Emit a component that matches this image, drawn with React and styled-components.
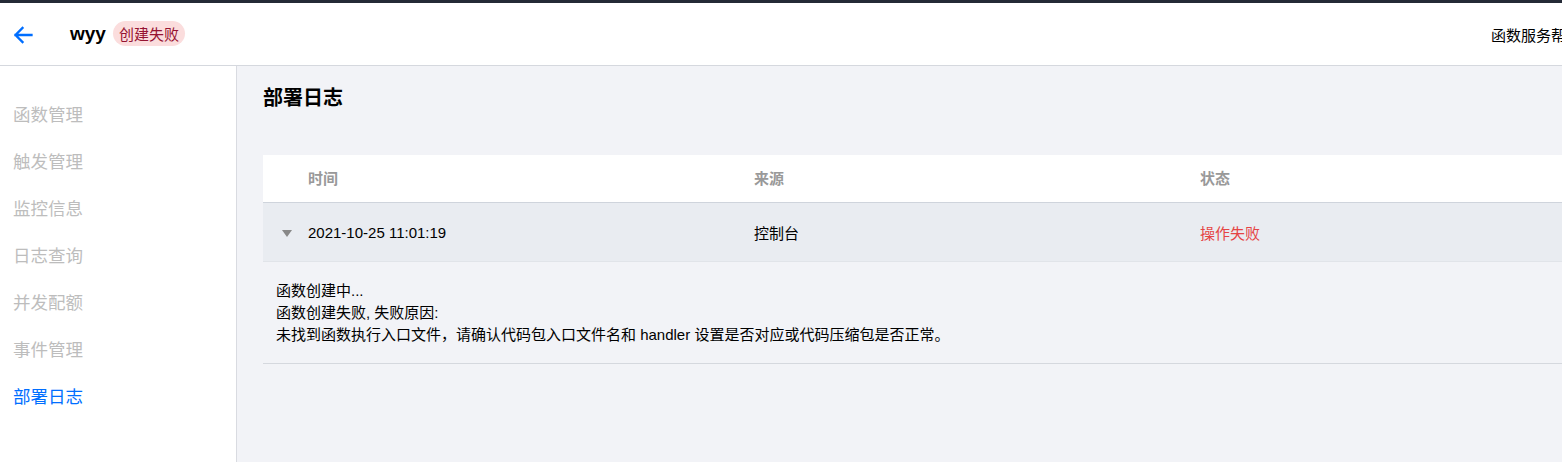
import React from "react";
import styled, { createGlobalStyle } from "styled-components";

const GlobalStyle = createGlobalStyle`
  html, body {
    margin: 0;
    padding: 0;
    overflow: hidden;
    background: #f2f3f7;
  }
  body {
    font-family: "Liberation Sans", "Noto Sans CJK SC", sans-serif;
    color: #000;
  }
`;

const Page = styled.div`
  width: 1600px;
  height: 462px;
  display: flex;
  flex-direction: column;
  border-top: 3px solid #242a36;
  box-sizing: border-box;
`;

const Header = styled.header`
  height: 62px;
  flex: none;
  display: flex;
  align-items: center;
  background: #fff;
  border-bottom: 1px solid #d5d8de;
  padding: 0 19px 0 13px;
`;

const BackButton = styled.button`
  border: 0;
  background: none;
  padding: 0;
  margin: 1px 37px 0 0;
  display: flex;
  cursor: pointer;
`;

const Name = styled.h1`
  margin: 0 7px 0 0;
  font-size: 19px;
  font-weight: bold;
  color: #000;
`;

const Badge = styled.span`
  display: inline-flex;
  align-items: center;
  height: 25px;
  padding: 0 6px;
  border-radius: 13px;
  background: #fbdddd;
  color: #961331;
  font-size: 15px;
  margin-top: -2px;
`;

const HelpLink = styled.a`
  margin-left: auto;
  font-size: 15px;
  color: #000;
  text-decoration: none;
`;

const Body = styled.div`
  flex: 1;
  display: flex;
  min-height: 0;
`;

const Sidebar = styled.nav`
  width: 236px;
  flex: none;
  background: #fff;
  border-right: 1px solid #d9dbe1;
  padding-top: 26px;
`;

const NavItem = styled.div`
  height: 47px;
  line-height: 47px;
  padding-left: 13px;
  font-size: 17.5px;
  color: ${({ $active }) => ($active ? "#006eff" : "#bdbdbd")};
  cursor: pointer;
`;

const Main = styled.main`
  flex: 1;
  padding: 18px 26px 0 26px;
`;

const Title = styled.h2`
  margin: 0 0 43px;
  font-size: 20px;
  line-height: 28px;
  font-weight: bold;
`;

const Table = styled.div`
  font-size: 15px;
`;

const Row = styled.div`
  display: grid;
  grid-template-columns: 45px 446px 446px 1fr;
  align-items: center;
`;

const HeadRow = styled(Row)`
  height: 48px;
  box-sizing: border-box;
  padding-bottom: 2px;
  background: #fff;
  border-bottom: 1px solid #cfd4dc;
  color: #999;
  font-weight: bold;
`;

const DataRow = styled(Row)`
  height: 58px;
  background: #e9ecf1;
  border-bottom: 1px solid #e1e4e9;
`;

const Expander = styled.span`
  display: flex;
  justify-content: center;
  padding-left: 2px;
  padding-top: 2px;
`;

const Status = styled.span`
  color: ${({ $error }) => ($error ? "#e54545" : "#000")};
`;

const Detail = styled.div`
  padding: 18px 13px 17px;
  line-height: 22px;
  border-bottom: 1px solid #d5d8de;
`;

const ArrowLeft = () => (
  <svg width="20" height="18" viewBox="0 0 20 18" fill="none">
    <path
      d="M18.5 9H2.5M9.5 2 2.5 9l7 7"
      stroke="#006eff"
      strokeWidth="2.3"
      strokeLinecap="square"
    />
  </svg>
);

const Caret = () => (
  <svg width="10" height="7" viewBox="0 0 10 7">
    <path d="M0 0h10L5 7z" fill="#888" />
  </svg>
);

const navItems = [
  "函数管理",
  "触发管理",
  "监控信息",
  "日志查询",
  "并发配额",
  "事件管理",
  "部署日志",
];

const detailLines = [
  "函数创建中...",
  "函数创建失败, 失败原因:",
  "未找到函数执行入口文件，请确认代码包入口文件名和 handler 设置是否对应或代码压缩包是否正常。",
];

export default function App() {
  return (
    <>
      <GlobalStyle />
      <Page>
        <Header>
          <BackButton aria-label="返回">
            <ArrowLeft />
          </BackButton>
          <Name>wyy</Name>
          <Badge>创建失败</Badge>
          <HelpLink href="#">函数服务帮助</HelpLink>
        </Header>
        <Body>
          <Sidebar>
            {navItems.map((item) => (
              <NavItem key={item} $active={item === "部署日志"}>
                {item}
              </NavItem>
            ))}
          </Sidebar>
          <Main>
            <Title>部署日志</Title>
            <Table>
              <HeadRow>
                <span />
                <span>时间</span>
                <span>来源</span>
                <span>状态</span>
              </HeadRow>
              <DataRow>
                <Expander>
                  <Caret />
                </Expander>
                <span>2021-10-25 11:01:19</span>
                <span>控制台</span>
                <Status $error>操作失败</Status>
              </DataRow>
              <Detail>
                {detailLines.map((line) => (
                  <div key={line}>{line}</div>
                ))}
              </Detail>
            </Table>
          </Main>
        </Body>
      </Page>
    </>
  );
}
